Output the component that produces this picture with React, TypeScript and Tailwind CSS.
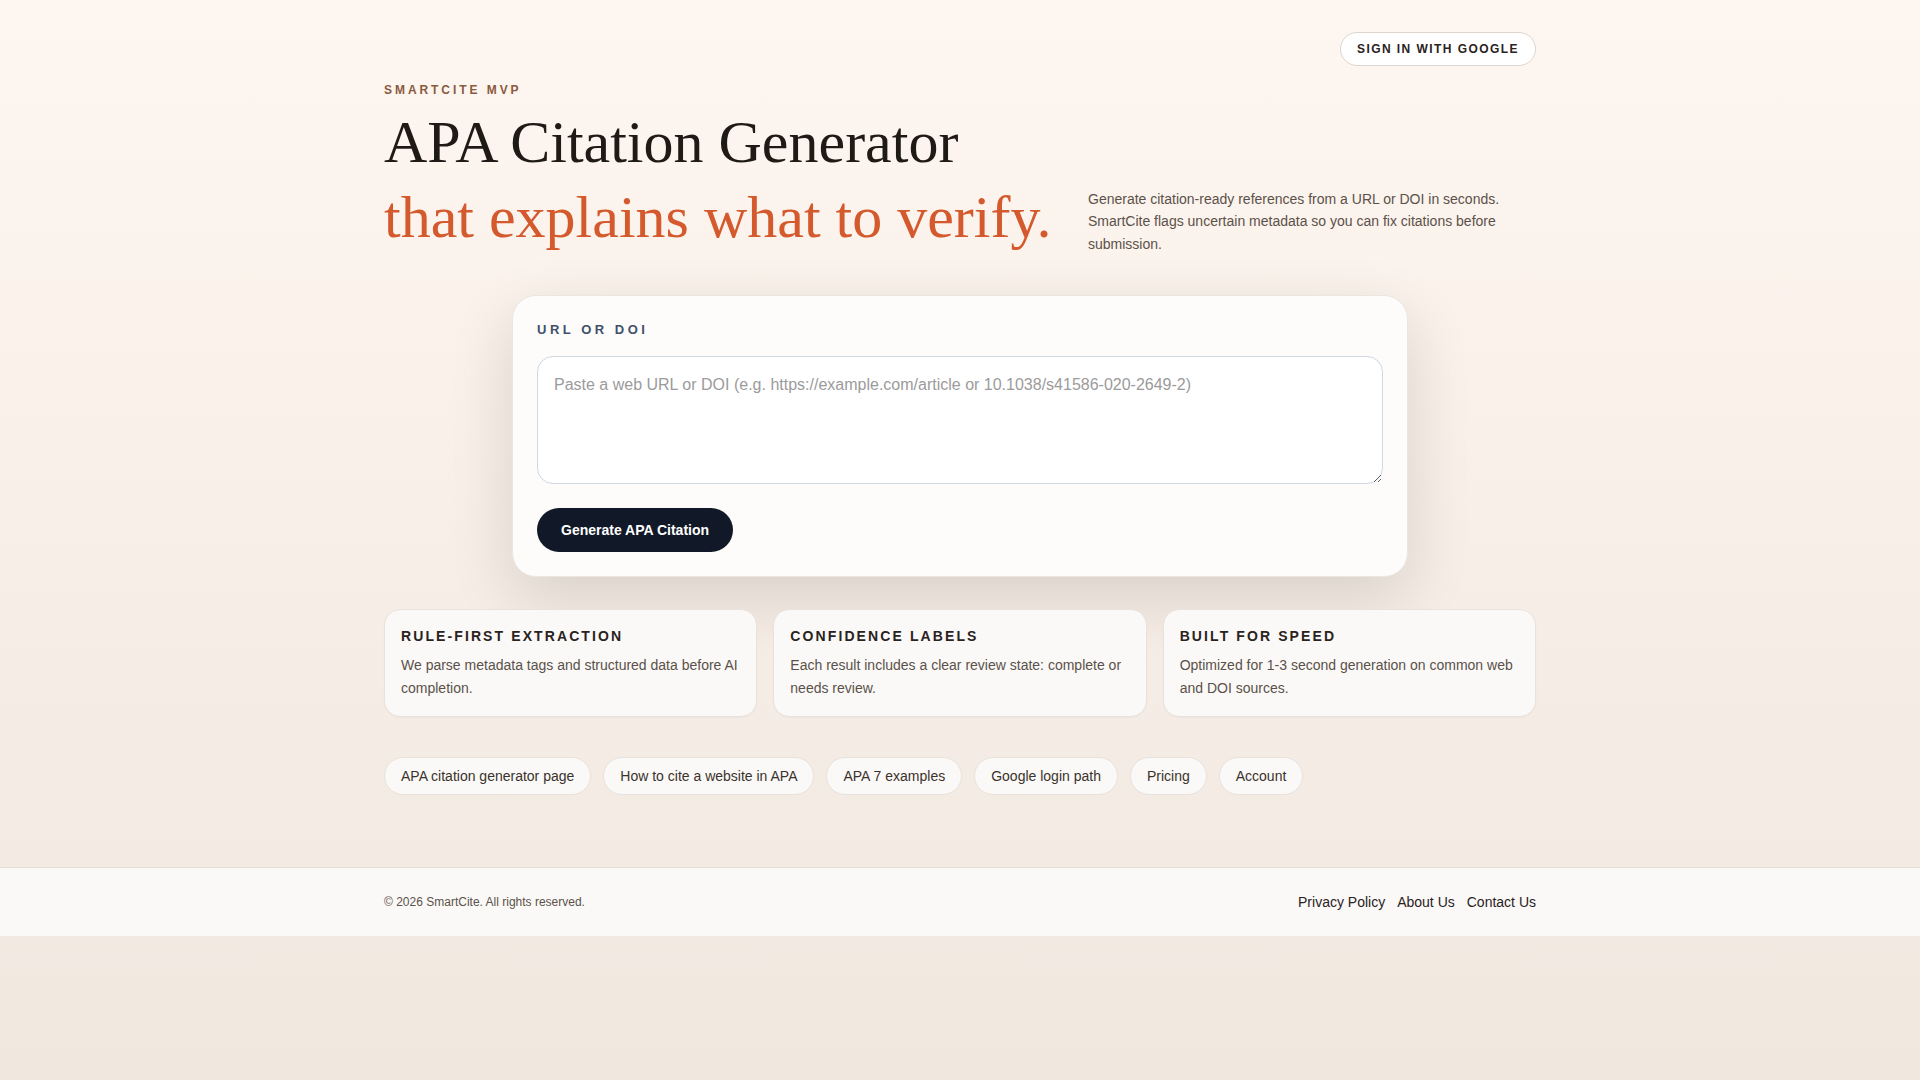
const features = [
  {
    title: "Rule-first extraction",
    body: "We parse metadata tags and structured data before AI completion.",
  },
  {
    title: "Confidence labels",
    body: "Each result includes a clear review state: complete or needs review.",
  },
  {
    title: "Built for speed",
    body: "Optimized for 1-3 second generation on common web and DOI sources.",
  },
];

const links = [
  "APA citation generator page",
  "How to cite a website in APA",
  "APA 7 examples",
  "Google login path",
  "Pricing",
  "Account",
];

export default function App() {
  return (
    <div className="min-h-screen bg-gradient-to-b from-[#fef6f0] to-[#f0e7df] font-['Liberation_Sans',Arial,sans-serif] text-[#2a221d]">
      <main className="mx-auto max-w-6xl pt-8 pb-[72px]">
        <header className="flex justify-end">
          <button className="rounded-full border border-[#ddd6d0] bg-white px-4 py-2 text-xs font-bold uppercase leading-4 tracking-[0.12em] text-[#2a221d]">
            Sign in with Google
          </button>
        </header>

        <section className="mt-4">
          <p className="text-xs font-semibold uppercase tracking-[0.245em] text-[#8a5a3e]">
            SmartCite MVP
          </p>
          <div className="mt-[7px] flex items-end justify-between gap-8">
            <h1 className="font-['Liberation_Serif','Times_New_Roman',serif] text-[60px] leading-[75px] text-[#1f1a16]">
              APA Citation Generator
              <br />
              <span className="text-[#d4592c]">that explains what to verify.</span>
            </h1>
            <p className="max-w-md text-sm leading-[22.5px] text-[#5b514a]">
              Generate citation-ready references from a URL or DOI in seconds. SmartCite flags
              uncertain metadata so you can fix citations before submission.
            </p>
          </div>
        </section>

        <section className="mx-auto mt-10 max-w-4xl rounded-3xl border border-[#ebe6e0] bg-[#fdfcfa] p-6 shadow-[0_22px_64px_rgba(40,30,20,0.14)]">
          <label className="block text-[13px] font-bold uppercase leading-5 tracking-[0.27em] text-[#41506a]">
            URL or DOI
          </label>
          <textarea
            className="mt-4 block h-32 w-full rounded-2xl border border-[#cfd8e3] bg-white p-4 text-base leading-6 text-[#1f1a16] placeholder:text-[#9b9b9b] outline-none"
            placeholder="Paste a web URL or DOI (e.g. https://example.com/article or 10.1038/s41586-020-2649-2)"
          />
          <button className="mt-6 rounded-full bg-[#111827] px-6 py-3 text-sm font-bold leading-5 text-white">
            Generate APA Citation
          </button>
        </section>

        <section className="mt-8 grid grid-cols-3 gap-4">
          {features.map((f) => (
            <div
              key={f.title}
              className="rounded-2xl border border-[#e8e2dc] bg-[#faf9f7] p-4 shadow-[0_1px_2px_rgba(0,0,0,0.03)]"
            >
              <h3 className="text-sm font-bold uppercase leading-5 tracking-[0.15em] text-[#2a221d]">
                {f.title}
              </h3>
              <p className="mt-2 text-sm leading-[23px] text-[#5b514a]">{f.body}</p>
            </div>
          ))}
        </section>

        <nav className="mt-10 flex flex-wrap gap-3">
          {links.map((l) => (
            <a
              key={l}
              href="#"
              className="rounded-full border border-[#e8e2dc] bg-[#faf9f7] px-4 py-2 text-sm leading-5 text-[#3a322c]"
            >
              {l}
            </a>
          ))}
        </nav>
      </main>

      <footer className="border-t border-[#e6ded7] bg-[#faf9f7]">
        <div className="mx-auto flex max-w-6xl items-center justify-between py-6">
          <p className="text-xs text-[#5b514a]">© 2026 SmartCite. All rights reserved.</p>
          <div className="flex gap-3 text-sm leading-5 text-[#2a221d]">
            <a href="#">Privacy Policy</a>
            <a href="#">About Us</a>
            <a href="#">Contact Us</a>
          </div>
        </div>
      </footer>
    </div>
  );
}
